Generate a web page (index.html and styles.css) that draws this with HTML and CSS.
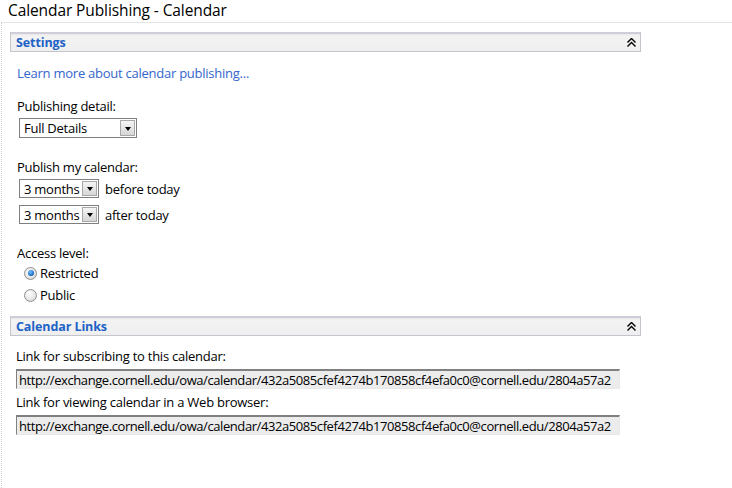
FILE: index.html
```html
<!DOCTYPE html>
<html>
<head>
<meta charset="utf-8">
<title>Calendar Publishing - Calendar</title>
<link rel="stylesheet" href="styles.css">
</head>
<body>
<h1 class="page-title">Calendar Publishing - Calendar</h1>
<div class="content">
  <section class="panel">
    <div class="panel-head">
      <span class="panel-title">Settings</span>
      <svg class="collapse" width="9" height="10" viewBox="0 0 9 10"><path d="M0.5 4.5 L4.5 0.5 L8.5 4.5 M0.5 8.5 L4.5 4.5 L8.5 8.5" fill="none" stroke="#000" stroke-width="1.4"/></svg>
    </div>
    <div class="panel-body">
      <a class="learn" href="#">Learn more about calendar publishing...</a>

      <div class="field first">
        <div class="label">Publishing detail:</div>
        <div class="select wide"><span class="select-text">Full Details</span><span class="select-btn"><i class="tri"></i></span></div>
      </div>

      <div class="field">
        <div class="label">Publish my calendar:</div>
        <div class="range">
          <div class="select narrow"><span class="select-text">3 months</span><span class="select-btn"><i class="tri"></i></span></div>
          <span>before today</span>
        </div>
        <div class="range">
          <div class="select narrow"><span class="select-text">3 months</span><span class="select-btn"><i class="tri"></i></span></div>
          <span>after today</span>
        </div>
      </div>

      <div class="field">
        <div class="label">Access level:</div>
        <div class="radio-row"><span class="radio checked"></span><span>Restricted</span></div>
        <div class="radio-row"><span class="radio"></span><span>Public</span></div>
      </div>
    </div>
  </section>

  <section class="panel">
    <div class="panel-head">
      <span class="panel-title">Calendar Links</span>
      <svg class="collapse" width="9" height="10" viewBox="0 0 9 10"><path d="M0.5 4.5 L4.5 0.5 L8.5 4.5 M0.5 8.5 L4.5 4.5 L8.5 8.5" fill="none" stroke="#000" stroke-width="1.4"/></svg>
    </div>
    <div class="links-body">
      <div class="label">Link for subscribing to this calendar:</div>
      <div class="url">http://exchange.cornell.edu/owa/calendar/432a5085cfef4274b170858cf4efa0c0@cornell.edu/2804a57a2</div>
      <div class="label">Link for viewing calendar in a Web browser:</div>
      <div class="url">http://exchange.cornell.edu/owa/calendar/432a5085cfef4274b170858cf4efa0c0@cornell.edu/2804a57a2</div>
    </div>
  </section>
</div>
</body>
</html>
```
FILE: styles.css
```css
html, body {
  margin: 0;
  padding: 0;
  background: #fff;
}

body {
  font-family: "Open Sans", "Noto Sans", "Liberation Sans", sans-serif;
  font-size: 13px;
  letter-spacing: -0.25px;
  color: #000;
  height: 488px;
  overflow: hidden;
}

.page-title {
  margin: 0;
  padding: 0 0 0 8px;
  height: 22px;
  line-height: 21px;
  font-size: 15.5px;
  font-weight: normal;
  letter-spacing: -0.1px;
  color: #000;
}

.content {
  border-top: 1px solid #e4e4e4;
  border-left: 1px dotted #cfcfcf;
  margin-left: 1px;
  height: 466px;
  padding: 9px 0 0 8px;
  box-sizing: border-box;
}

.panel {
  width: 631px;
}

.panel-head {
  display: flex;
  align-items: center;
  justify-content: space-between;
  height: 17px;
  border: 1px solid #c4c4cc;
  border-top: 2px solid #d0ccd8;
  background: linear-gradient(#e8e8ec 0, #f3f3f3 2px, #efefef 100%);
  padding: 0 4px 0 5px;
}

.panel-title {
  color: #2062c6;
  font-weight: bold;
  font-size: 12.5px;
  letter-spacing: -0.1px;
}

.collapse {
  display: block;
  margin-top: 1px;
}

.panel-body {
  padding: 11px 0 10px 7px;
}

.learn {
  display: block;
  line-height: 20px;
  color: #3366cc;
  text-decoration: none;
}

.field {
  margin-top: 19px;
}

.field.first {
  margin-top: 13px;
}

.label {
  line-height: 20px;
  margin-bottom: 2px;
}

.select {
  display: inline-flex;
  align-items: center;
  height: 18px;
  border: 1px solid #7f7f7f;
  background: #fff;
  margin-left: 2px;
}

.select.wide { width: 116px; }
.select.narrow { width: 78px; height: 17px; }

.select-text {
  flex: 1;
  padding-left: 4px;
  white-space: nowrap;
}

.select-btn {
  width: 15px;
  height: 16px;
  margin-right: 1px;
  border: 1px solid #a8a8a8;
  box-sizing: border-box;
  background: linear-gradient(#f4f4f4, #d6d6d6);
  display: flex;
  align-items: center;
  justify-content: center;
}

.narrow .select-btn { height: 15px; }

.tri {
  width: 0;
  height: 0;
  border-left: 3.5px solid transparent;
  border-right: 3.5px solid transparent;
  border-top: 4px solid #000;
  margin-top: 1px;
}

.range {
  display: flex;
  align-items: center;
  gap: 6px;
  margin-bottom: 7px;
}

.range:last-child { margin-bottom: 0; }

.radio-row {
  display: flex;
  align-items: center;
  gap: 3px;
  height: 22px;
  padding-left: 7px;
}

.field .label + .radio-row { margin-top: -3px; }

.radio {
  width: 11px;
  height: 11px;
  border-radius: 50%;
  border: 1px solid #8e8f8f;
  background: radial-gradient(circle at 40% 35%, #fff 0, #e6e6e6 55%, #cfcfcf 100%);
  position: relative;
}

.radio.checked::after {
  content: "";
  position: absolute;
  left: 2.5px;
  top: 2.5px;
  width: 6px;
  height: 6px;
  border-radius: 50%;
  background: radial-gradient(circle at 40% 35%, #7ac4ff 0, #1f70c8 60%, #0b3f7a 100%);
}

.links-body {
  padding: 9px 0 0 6px;
}

.links-body .label {
  line-height: 22px;
  margin-bottom: 2px;
}

.url {
  width: 600px;
  height: 17px;
  line-height: 18px;
  overflow: hidden;
  white-space: nowrap;
  background: #ececec;
  border-top: 2px solid #808080;
  border-left: 1px solid #808080;
  border-right: 1px solid #e8e8e8;
  border-bottom: 1px solid #e8e8e8;
  padding-left: 2px;
  letter-spacing: -0.42px;
  margin-bottom: 2px;
}
```
